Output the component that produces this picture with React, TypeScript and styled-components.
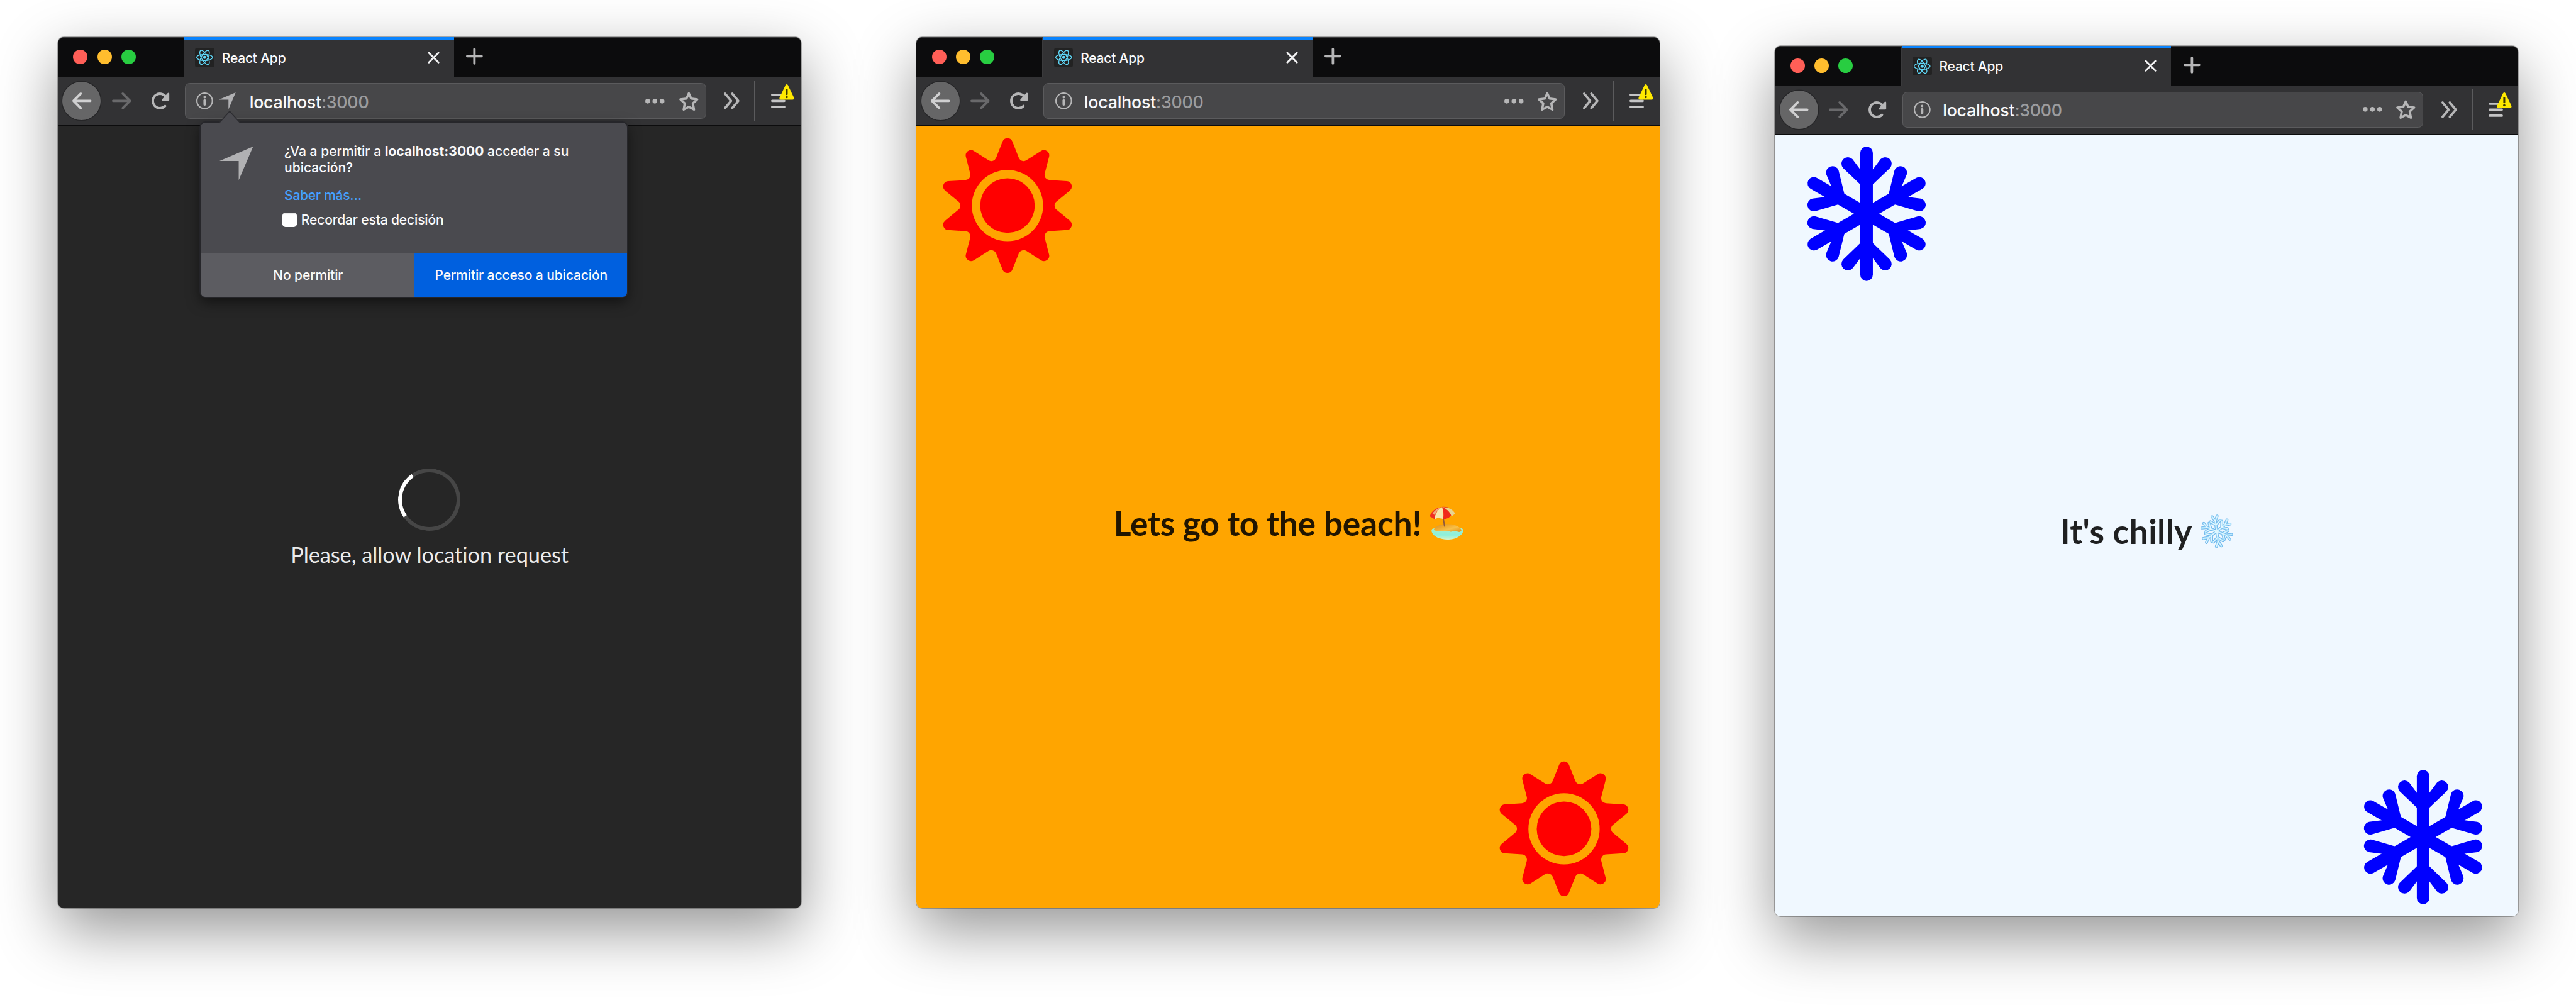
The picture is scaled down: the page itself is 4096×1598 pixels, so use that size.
import React from "react";
import styled, { createGlobalStyle, css } from "styled-components";

/* Lengths are written in design pixels of a 4290px wide board. */
const u = (n: number) => `${((n * 4096) / 4290).toFixed(3)}px`;

const color = {
  frame: "#0c0c0d",
  toolbar: "#323234",
  field: "#474749",
  fieldBorder: "#5b5b5d",
  icon: "#b6b6b7",
  popup: "#4a4a4f",
  accent: "#0a84ff",
  primary: "#0060df",
};

const Global = createGlobalStyle`
  html, body { margin: 0; background: #fff; }
  body { font-family: Inter, "Liberation Sans", sans-serif; font-weight: 450; overflow: hidden; }
  * { box-sizing: border-box; }
`;

const Board = styled.main`
  display: flex;
  align-items: flex-start;
  gap: ${u(192)};
  width: 4096px;
  height: 1598px;
  padding: ${u(62)} 0 0 ${u(96)};
  background: #fff;
`;

const Window = styled.section<{ $drop?: number }>`
  position: relative;
  display: flex;
  flex-direction: column;
  flex: none;
  width: ${u(1238)};
  height: ${u(1450)};
  margin-top: ${(p) => u(p.$drop ?? 0)};
  border-radius: ${u(10)};
  box-shadow: 0 0 0 1px rgba(0, 0, 0, 0.28), 0 ${u(36)} ${u(100)} rgba(0, 0, 0, 0.42);
`;

const TabBar = styled.header`
  display: flex;
  height: ${u(66)};
  background: ${color.frame};
  border-radius: ${u(10)} ${u(10)} 0 0;
  box-shadow: inset 0 1px 0 #3c3c3d;
`;

const Lights = styled.div`
  display: flex;
  align-items: center;
  gap: ${u(16)};
  width: ${u(210)};
  padding-left: ${u(26)};
`;

const Light = styled.i<{ $color: string }>`
  width: ${u(24)};
  height: ${u(24)};
  border-radius: 50%;
  background: ${(p) => p.$color};
`;

const Tab = styled.div`
  display: flex;
  align-items: center;
  width: ${u(450)};
  padding: ${u(4)} ${u(24)} ${u(2)} ${u(18)};
  border-left: ${u(2)} solid #3a3a3c;
  background: linear-gradient(${color.accent} ${u(4)}, ${color.toolbar} ${u(4)});
`;

const Favicon = styled.span`
  display: flex;
  width: ${u(32)};
  height: ${u(32)};
  border-radius: ${u(4)};
  background: #222;
`;

const TabTitle = styled.span`
  flex: 1;
  padding: ${u(2)} 0 0 ${u(12.5)};
  font-size: ${u(22)};
  letter-spacing: -0.01em;
  color: #f9f9fa;
`;

const NewTab = styled.div`
  display: flex;
  align-items: center;
  justify-content: center;
  width: ${u(68)};
  padding-bottom: ${u(2)};
`;

const Toolbar = styled.nav`
  display: flex;
  align-items: center;
  height: ${u(82)};
  padding-left: ${u(8)};
  background: ${color.toolbar};
  border-bottom: ${u(2)} solid #0c0c0d;
`;

const BackButton = styled.div`
  display: flex;
  align-items: center;
  justify-content: center;
  width: ${u(64)};
  height: ${u(64)};
  border-radius: 50%;
  background: #666667;
  box-shadow: 0 0 0 ${u(1.5)} #262628;
`;

const ToolCell = styled.div<{ $w: number; $shift?: number }>`
  position: relative;
  display: flex;
  align-items: center;
  justify-content: center;
  width: ${(p) => u(p.$w)};
  height: ${u(64)};
  padding-left: ${(p) => u(Math.max(p.$shift ?? 0, 0) * 2)};
  padding-right: ${(p) => u(Math.max(-(p.$shift ?? 0), 0) * 2)};
`;

const Divider = styled.div`
  width: ${u(2)};
  height: ${u(68)};
  background: #5b5b5d;
`;

const UrlField = styled.div`
  display: flex;
  align-items: center;
  flex: 1;
  height: ${u(60)};
  padding: 0 ${u(12)} 0 ${u(18)};
  border: ${u(2)} solid ${color.fieldBorder};
  border-radius: ${u(8)};
  background: ${color.field};
`;

const GeoSlot = styled.span`
  display: flex;
  margin-left: ${u(10)};
`;

const Url = styled.span<{ $gap: number }>`
  flex: 1;
  padding: ${u(2)} 0 0 ${(p) => u(p.$gap)};
  font-size: ${u(28)};
  letter-spacing: -0.008em;
  color: #f9f9fa;
`;

const Port = styled.span`
  color: #9c9c9e;
`;

const FieldActions = styled.div`
  display: flex;
  align-items: center;
  gap: ${u(24)};
`;

const Badge = styled.span`
  position: absolute;
  left: ${u(40)};
  top: ${u(4)};
  display: flex;
`;

const Svg = styled.svg<{ $w: number; $h: number }>`
  display: block;
  flex: none;
  overflow: visible;
  width: ${(p) => u(p.$w)};
  height: ${(p) => u(p.$h)};
`;

const Page = styled.div<{ $bg: string; $ink: string }>`
  display: flex;
  flex: 1;
  flex-direction: column;
  justify-content: space-between;
  padding: ${u(20)} ${u(47)} ${u(20)} ${u(40)};
  border-radius: 0 0 ${u(10)} ${u(10)};
  background: ${(p) => p.$bg};
  color: ${(p) => p.$ink};
  font-family: Lato, sans-serif;
`;

const Corner = styled.div<{ $end?: boolean }>`
  display: flex;
  height: ${u(224)};
  ${(p) =>
    p.$end &&
    css`
      align-self: flex-end;
    `}
`;

const Headline = styled.h1<{ $track: number }>`
  display: flex;
  align-items: center;
  justify-content: center;
  margin: 0;
  padding: ${u(20)} 0 0 ${u(8)};
  font-size: ${u(56)};
  line-height: ${u(68)};
  font-weight: 700;
  font-variant-ligatures: none;
  letter-spacing: ${(p) => u(p.$track)};
  white-space: nowrap;
`;

const EmojiSlot = styled.span`
  display: flex;
  margin-left: ${u(13)};
`;

const Waiting = styled.div`
  display: flex;
  flex: 1;
  flex-direction: column;
  align-items: center;
  padding-top: ${u(550)};
  padding-left: ${u(7)};
`;

const Spinner = styled.div`
  width: ${u(104)};
  height: ${u(104)};
  border: ${u(7)} solid #464646;
  border-left-color: #fff;
  border-radius: 50%;
  transform: rotate(10.4deg);
`;

const WaitingText = styled.p`
  margin: ${u(18)} 0 0 ${u(1)};
  font-size: ${u(36)};
  line-height: ${u(44)};
  font-weight: 400;
  font-variant-ligatures: none;
  letter-spacing: ${u(-0.06)};
  color: #ebebeb;
`;

const Popup = styled.aside`
  position: absolute;
  left: ${u(238)};
  top: ${u(142)};
  display: flex;
  flex-direction: column;
  width: ${u(710)};
  height: ${u(290)};
  border-radius: ${u(8)};
  background: ${color.popup};
  color: #f9f9fa;
  font-size: ${u(22)};
  line-height: ${u(27)};
  box-shadow: 0 0 0 ${u(2)} #26262a, 0 ${u(8)} ${u(22)} rgba(0, 0, 0, 0.55);
`;

const PopupArrow = styled.span`
  position: absolute;
  left: ${u(30)};
  top: ${u(-20)};
  display: flex;
`;

const PopupBody = styled.div`
  display: flex;
  flex: 1;
  padding: ${u(35)} ${u(40)} 0 ${u(32)};
`;

const PopupIcon = styled.div`
  width: ${u(107.5)};
  padding-top: ${u(5)};
`;

const PopupText = styled.div`
  display: flex;
  flex-direction: column;
`;

const Question = styled.p`
  margin: 0;
  white-space: nowrap;
  letter-spacing: ${u(0.02)};
`;

const More = styled.a`
  margin-top: ${u(19)};
  letter-spacing: ${u(-0.25)};
  color: #45a1ff;
`;

const Remember = styled.label`
  display: flex;
  align-items: center;
  gap: ${u(7)};
  margin: ${u(14)} 0 0 ${u(-3)};
  letter-spacing: ${u(-0.15)};
`;

const CheckBox = styled.span`
  width: ${u(24)};
  height: ${u(24)};
  border-radius: ${u(5)};
  background: linear-gradient(#d9d9d9, #fff 16%);
`;

const PopupActions = styled.div`
  display: grid;
  grid-template-columns: 1fr 1fr;
  height: ${u(73)};
`;

const PopupButton = styled.div<{ $primary?: boolean }>`
  display: flex;
  align-items: center;
  justify-content: center;
  padding: ${u(2)} 0 0 ${u(3)};
  border-top: ${u(2)} solid ${(p) => (p.$primary ? "#1a70e2" : "#6e6e72")};
  border-radius: ${(p) => (p.$primary ? `0 0 ${u(8)} 0` : `0 0 0 ${u(8)}`)};
  background: ${(p) => (p.$primary ? color.primary : "#5c5c61")};
  letter-spacing: ${u(-0.12)};
`;

const ReactMark = () => (
  <Svg $w={32} $h={32} viewBox="-16 -16 32 32" fill="none" stroke="#61dafb" strokeWidth={1.4}>
    {[0, 60, 120].map((a) => (
      <ellipse key={a} rx={13.2} ry={5.2} transform={`rotate(${a})`} />
    ))}
    <circle r={2.6} fill="#61dafb" stroke="none" />
  </Svg>
);

const Cross = () => (
  <Svg $w={20} $h={20} viewBox="0 0 20 20" stroke="#f3f3f4" strokeWidth={3} strokeLinecap="round">
    <path d="M2 2L18 18M18 2L2 18" />
  </Svg>
);

const Plus = () => (
  <Svg $w={28} $h={28} viewBox="0 0 28 28" stroke={color.icon} strokeWidth={4} strokeLinecap="round">
    <path d="M14 2V26M2 14H26" />
  </Svg>
);

const Arrow = ({ stroke, flip }: { stroke: string; flip?: boolean }) => (
  <Svg $w={32} $h={28} viewBox="0 0 32 28" fill="none" stroke={stroke} strokeWidth={4} strokeLinecap="round" strokeLinejoin="round">
    <path d={flip ? "M2 14H30M18 2L30 14L18 26" : "M30 14H2M14 2L2 14L14 26"} />
  </Svg>
);

const Reload = () => (
  <Svg $w={30} $h={28} viewBox="0 0 30 28" fill="none" stroke={color.icon} strokeWidth={4} strokeLinecap="round" strokeLinejoin="round">
    <path d="M22.5 22.6A12 12 0 1 1 24.5 8.2" />
    <path d="M28 2V12.5H18.5Z" fill={color.icon} strokeWidth={3} />
  </Svg>
);

const Info = () => (
  <Svg $w={28} $h={28} viewBox="0 0 28 28" fill="none" stroke={color.icon} strokeWidth={2.2}>
    <circle cx={14} cy={14} r={12.9} />
    <circle cx={14} cy={7.8} r={2.1} fill={color.icon} stroke="none" />
    <path d="M14 13.2V20" strokeWidth={4} strokeLinecap="round" />
  </Svg>
);

const Geo = ({ size }: { size: number }) => (
  <Svg $w={size} $h={size} viewBox="0 0 56 56" fill="#b1b1b3">
    <path d="M56 0L0 24H32V56Z" />
  </Svg>
);

const Dots = () => (
  <Svg $w={32} $h={8} viewBox="0 0 32 8" fill={color.icon}>
    <circle cx={4} cy={4} r={4} />
    <circle cx={16} cy={4} r={4} />
    <circle cx={28} cy={4} r={4} />
  </Svg>
);

const Star = () => (
  <Svg $w={32} $h={32} viewBox="0 0 32 32" fill="none" stroke={color.icon} strokeWidth={3.8} strokeLinejoin="round">
    <path d="M16 2.6L20 11.2L30 12.6L22.7 19.2L24.6 29.6L16 25L7.4 29.6L9.3 19.2L2 12.6L12 11.2Z" />
  </Svg>
);

const Chevrons = () => (
  <Svg $w={26} $h={28} viewBox="0 0 26 28" fill="none" stroke={color.icon} strokeWidth={4} strokeLinecap="round" strokeLinejoin="round">
    <path d="M2 2L12 14L2 26M14 2L24 14L14 26" />
  </Svg>
);

const Menu = () => (
  <Svg $w={24} $h={28} viewBox="0 0 24 28" stroke="#c4c4c5" strokeWidth={4} strokeLinecap="round">
    <path d="M2 4H22M2 14H22M2 24H22" />
  </Svg>
);

const Warning = () => (
  <Svg $w={25} $h={26} viewBox="0 0 25 26">
    <path d="M10.4 1.5Q12.5 -1.4 14.6 1.5L24.4 22Q25.4 25.6 22 25.8H3Q-.4 25.6 .6 22Z" fill="#ffe900" />
    <path d="M12.5 9V16.5" stroke="#3e3a00" strokeWidth={3.2} strokeLinecap="round" />
    <circle cx={12.5} cy={21.4} r={1.9} fill="#3e3a00" />
  </Svg>
);

/* Ten spikes, each one a rounded tip followed by a rounded notch. */
const sunOutline = (() => {
  const at = (x: number, y: number, k: number) => {
    const a = (k * Math.PI) / 5;
    return `${(x * Math.cos(a) - y * Math.sin(a)).toFixed(2)} ${(x * Math.sin(a) + y * Math.cos(a)).toFixed(2)}`;
  };
  let d = `M${at(-24.5, -320, 0)}`;
  for (let k = 0; k < 10; k++) {
    d += `A26.5 26.5 0 0 1 ${at(24.5, -320, k)}L${at(56.5, -239, k)}A26 26 0 0 0 ${at(-56.5, -239, k + 1)}`;
    if (k < 9) d += `L${at(-24.5, -320, k + 1)}`;
  }
  return d + "Z";
})();

const Sun = () => (
  <Svg $w={224} $h={224} viewBox="-336 -336 672 672" fill="#f00">
    <path fillRule="evenodd" d={`${sunOutline}M-178 0A178 178 0 0 0 178 0A178 178 0 0 0 -178 0Z`} />
    <circle r={136.5} />
  </Svg>
);

const branch = "M0 -115L31.5 -146.5L117 -228.5A31.8 31.8 0 1 0 69.5 -272L31.5 -221.5L0 -190Z";

const Snow = () => (
  <Svg $w={224} $h={224} viewBox="-336 -336 672 672" fill="#00f">
    {[0, 60, 120, 180, 240, 300].map((a) => (
      <g key={a} transform={`rotate(${a})`}>
        <path d="M-31.5 0V-304A31.5 31.5 0 0 1 31.5 -304V0Z" />
        <path d={branch} />
        <path d={branch} transform="scale(-1 1)" />
      </g>
    ))}
  </Svg>
);

const BeachEmoji = () => (
  <Svg $w={56} $h={56} viewBox="0 0 56 56">
    <defs>
      <linearGradient id="sand" x1="0" y1="0" x2="1" y2="1">
        <stop offset="0" stopColor="#c98a3a" />
        <stop offset=".35" stopColor="#f0a92c" />
        <stop offset=".6" stopColor="#f7c04a" />
        <stop offset="1" stopColor="#dd8d12" />
      </linearGradient>
      <linearGradient id="sea" x1="0" y1="0" x2="0" y2="1">
        <stop offset="0" stopColor="#a9efc9" />
        <stop offset=".6" stopColor="#8bf0dc" />
        <stop offset="1" stopColor="#d3f3c8" />
      </linearGradient>
    </defs>
    <path d="M3.4 41C3 36.500 8 36 14 37H48C53 35.500 56.500 37 56 41C55 49 43 55.500 30 55.500C16 55.500 4.500 49 3.400 41Z" fill="url(#sea)" />
    <path d="M7.500 38C10 33 19 29.500 29 29.500C41 29.500 50 33 53 39C54 42 49 44 46 42C41 39.500 38 43.500 33 42C27 40 22 43 17 41.500C12 40.500 7 42 7.500 38Z" fill="url(#sand)" />
    <path d="M22.800 19L25 33" stroke="#8f5a3c" strokeWidth={2} strokeLinecap="round" />
    <path d="M.5 17C2 10 9 2.500 21 1.200C14 6 9.500 12 8.500 21.800C6 20 4 18.500 .5 17Z" fill="#f02f22" />
    <path d="M8.500 21.800C9 13 14 5 21 1.200C23 7 24 14 22.800 21.300C19 20.300 16 20 14 19.500C12 20 10.500 21 8.500 21.800Z" fill="#f7e9ae" />
    <path d="M4.500 13C7.500 7.500 13 3 21 1.200C15.500 4.500 11 9 9 14.500C7.500 13.800 6 13.300 4.500 13Z" fill="#efe0a4" opacity={0.7} />
    <path d="M22.800 21.300C24 14 23.500 7 21 1.200C29 4 34 9 36.500 16.200C34 17 33 18 31.500 19.500C28.500 20.800 25.500 21.600 22.800 21.300Z" fill="#f02a1c" />
    <path d="M21 1.200C31 1.500 39.500 5 42.500 12C40.500 14.500 38.500 15.800 36.500 16.200C34 9 29 4 21 1.200Z" fill="#e8d491" />
    <path d="M17 2.200C22 .2 29 .4 34 3.400C29 2.200 25 1.600 21 1.200Z" fill="#e9402c" />
  </Svg>
);

const snowArm = "M0 0V-18M0 -10.5L-8 -17M0 -10.5L8 -17M0 -17L-4.200 -25M0 -17L4.200 -25";

const SnowEmoji = () => (
  <Svg $w={56} $h={56} viewBox="-28 -28 56 56" fill="none" strokeLinecap="round" strokeLinejoin="round">
    {[
      ["#69b3ea", 4.8],
      ["#a9e0fa", 3],
      ["#e9f9ff", 1.1],
    ].map(([stroke, width]) => (
      <g key={stroke} stroke={stroke} strokeWidth={width}>
        {[-8, 52, 112, 172, 232, 292].map((a) => (
          <path key={a} d={snowArm} transform={`rotate(${a})`} />
        ))}
      </g>
    ))}
    <circle r={3} fill="#dcf6ff" />
  </Svg>
);

const Chrome = ({ geo }: { geo?: boolean }) => (
  <>
    <TabBar>
      <Lights>
        <Light $color="#ff5f57" />
        <Light $color="#ffbd2e" />
        <Light $color="#28cd41" />
      </Lights>
      <Tab>
        <Favicon>
          <ReactMark />
        </Favicon>
        <TabTitle>React App</TabTitle>
        <Cross />
      </Tab>
      <NewTab>
        <Plus />
      </NewTab>
    </TabBar>
    <Toolbar>
      <BackButton>
        <Arrow stroke="#d0d0d1" />
      </BackButton>
      <ToolCell $w={68}>
        <Arrow stroke="#69696b" flip />
      </ToolCell>
      <ToolCell $w={72} $shift={-5}>
        <Reload />
      </ToolCell>
      <UrlField>
        <Info />
        {geo && (
          <GeoSlot>
            <Geo size={28} />
          </GeoSlot>
        )}
        <Url $gap={geo ? 22.5 : 20.5}>
          localhost<Port>:3000</Port>
        </Url>
        <FieldActions>
          <Dots />
          <Star />
        </FieldActions>
      </UrlField>
      <ToolCell $w={80} $shift={3}>
        <Chevrons />
      </ToolCell>
      <Divider />
      <ToolCell $w={76}>
        <Menu />
        <Badge>
          <Warning />
        </Badge>
      </ToolCell>
    </Toolbar>
  </>
);

const LocationPrompt = () => (
  <Popup>
    <PopupArrow>
      <Svg $w={36} $h={21} viewBox="0 0 36 21">
        <path d="M1 20L18 1L35 20" fill={color.popup} stroke="#2c2c30" strokeWidth={1.6} />
        <path d="M2 20H34V22H2Z" fill={color.popup} />
      </Svg>
    </PopupArrow>
    <PopupBody>
      <PopupIcon>
        <Geo size={56} />
      </PopupIcon>
      <PopupText>
        <Question>
          ¿Va a permitir a <b>localhost:3000</b> acceder a su
          <br />
          ubicación?
        </Question>
        <More>Saber más…</More>
        <Remember>
          <CheckBox />
          Recordar esta decisión
        </Remember>
      </PopupText>
    </PopupBody>
    <PopupActions>
      <PopupButton>No permitir</PopupButton>
      <PopupButton $primary>Permitir acceso a ubicación</PopupButton>
    </PopupActions>
  </Popup>
);

export default function App() {
  return (
    <>
      <Global />
      <Board>
        <Window>
          <Chrome geo />
          <Page $bg="#262626" $ink="#e9e9e9">
            <Waiting>
              <Spinner />
              <WaitingText>Please, allow location request</WaitingText>
            </Waiting>
          </Page>
          <LocationPrompt />
        </Window>
        <Window>
          <Chrome />
          <Page $bg="#ffa500" $ink="#211500">
            <Corner>
              <Sun />
            </Corner>
            <Headline $track={-0.25}>
              Lets go to the beach!
              <EmojiSlot>
                <BeachEmoji />
              </EmojiSlot>
            </Headline>
            <Corner $end>
              <Sun />
            </Corner>
          </Page>
        </Window>
        <Window $drop={14}>
          <Chrome />
          <Page $bg="#f0f8ff" $ink="#1f2021">
            <Corner>
              <Snow />
            </Corner>
            <Headline $track={0.35}>
              It's chilly
              <EmojiSlot>
                <SnowEmoji />
              </EmojiSlot>
            </Headline>
            <Corner $end>
              <Snow />
            </Corner>
          </Page>
        </Window>
      </Board>
    </>
  );
}
